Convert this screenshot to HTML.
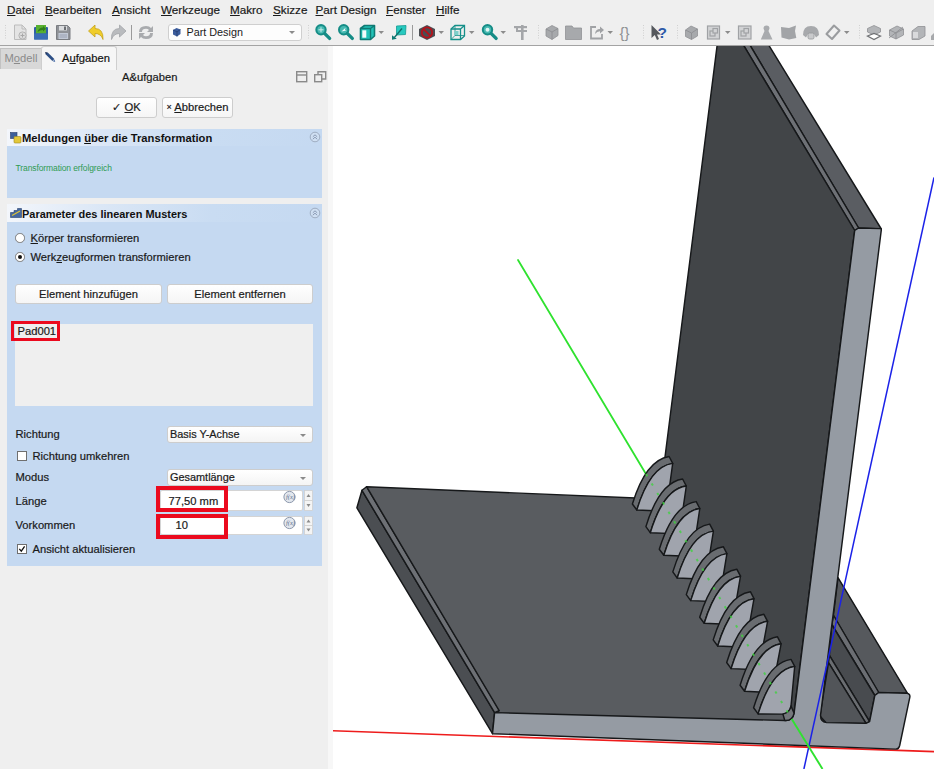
<!DOCTYPE html>
<html lang="de">
<head>
<meta charset="utf-8">
<title>FreeCAD</title>
<style>
html,body{margin:0;padding:0;}
body{width:934px;height:769px;overflow:hidden;background:#efefef;font-family:"Liberation Sans",sans-serif;color:#1c1c1c;position:relative;}
.abs{position:absolute;}
.menu span{position:absolute;top:3px;font-size:11.7px;-webkit-text-stroke:0.2px #1a1a1a;line-height:14px;white-space:nowrap;color:#1a1a1a;}
u{text-decoration:underline;text-underline-offset:1px;}
#toolbar{position:absolute;left:0;top:20px;width:934px;height:25px;background:#efefef;border-bottom:1px solid #a3a3a3;}
#view{position:absolute;left:333px;top:46px;width:601px;height:723px;background:#fff;}
#split{position:absolute;left:328px;top:46px;width:5px;height:723px;background:#f7f7f7;}
.lbl{position:absolute;font-size:11.2px;-webkit-text-stroke:0.2px #1a1a1a;line-height:14px;white-space:nowrap;color:#1a1a1a;}
.btn{position:absolute;box-sizing:border-box;border:1px solid #cdcdcd;border-radius:3px;background:linear-gradient(#ffffff,#f5f5f5);font-size:11.2px;-webkit-text-stroke:0.2px #1a1a1a;line-height:18px;text-align:center;color:#1a1a1a;white-space:nowrap;}
.combo{position:absolute;box-sizing:border-box;border:1px solid #cdcdcd;border-radius:3px;background:linear-gradient(#ffffff,#f4f4f4);font-size:10.9px;-webkit-text-stroke:0.2px #1a1a1a;line-height:15px;color:#1a1a1a;padding-left:2px;white-space:nowrap;}
.combo:after{content:"";position:absolute;right:6px;top:7px;border-left:3px solid transparent;border-right:3px solid transparent;border-top:3px solid #8a8a8a;}
.sec{position:absolute;left:7px;width:314.5px;background:#c5d9f1;}
.sechead{position:absolute;left:7px;width:315px;height:17px;background:linear-gradient(90deg,#f3f6fb 0%,#dbe7f6 30%,#c9dcf2 65%,#c5d9f1 100%);}
.sechead b{position:absolute;left:15px;top:2px;font-size:11.2px;line-height:14px;white-space:nowrap;color:#111;}
.red{position:absolute;box-sizing:border-box;border:4px solid #eb0a1e;}
.input{position:absolute;box-sizing:border-box;background:#fff;border:1px solid #d4d4d4;border-radius:2px;}
.cb{position:absolute;box-sizing:border-box;width:10px;height:10px;border:1px solid #6f6f6f;background:#fff;}
.radio{position:absolute;box-sizing:border-box;width:9.5px;height:9.5px;border:1px solid #7a7a7a;border-radius:50%;background:#fff;}
</style>
</head>
<body>
<!-- MENU -->
<div class="menu">
<span style="left:7px"><u>D</u>atei</span>
<span style="left:45px"><u>B</u>earbeiten</span>
<span style="left:112px"><u>A</u>nsicht</span>
<span style="left:161px"><u>W</u>erkzeuge</span>
<span style="left:230px"><u>M</u>akro</span>
<span style="left:273px"><u>S</u>kizze</span>
<span style="left:315.5px"><u>P</u>art Design</span>
<span style="left:386px"><u>F</u>enster</span>
<span style="left:436px"><u>H</u>ilfe</span>
</div>
<!-- TOOLBAR -->
<div id="toolbar"></div>
<!--TB-START-->
<svg class="abs" style="left:0;top:20px" width="934" height="25" viewBox="0 20 934 25">
<!-- handles -->
<g stroke="#d0d0d0" stroke-width="1" stroke-dasharray="1 1.5"><path d="M5.5 25 V40"/><path d="M308.5 25 V40"/><path d="M538.5 25 V40"/><path d="M643.5 25 V40"/><path d="M677.5 25 V40"/><path d="M859.5 25 V40"/></g>
<!-- new doc -->
<path d="M14.5 25 H22 L26 29 V39.5 H14.5 Z" fill="#e4e4e4" stroke="#bcbcbc" stroke-width="1"/>
<path d="M22 25 V29 H26" fill="none" stroke="#bcbcbc"/>
<circle cx="22.5" cy="35.5" r="3.6" fill="#dcdcdc" stroke="#b4b4b4"/><path d="M20.5 35.5 H24.5 M22.5 33.5 V37.5" stroke="#a8a8a8" stroke-width="1"/>
<!-- open -->
<rect x="34" y="27" width="14" height="12.5" rx="1" fill="#2f5fa5"/>
<path d="M36 25 H46 V33.5 H36 Z" fill="#57b030"/>
<path d="M37.5 32 Q38.5 27.5 43 27.5 V26 L46 28.8 L43 31.5 V30 Q40 30 37.5 32 Z" fill="#2f7d1c"/>
<rect x="34" y="33.5" width="14" height="6" fill="#3a6db5"/>
<!-- save -->
<path d="M56.5 25.5 H67.5 L70 28 V39.5 H56.5 Z" fill="#8f9297" stroke="#7a7d82" stroke-width="1"/>
<rect x="59" y="26" width="8" height="4.5" fill="#d9dbde"/><rect x="64" y="26.5" width="2" height="3.5" fill="#6b6e73"/>
<rect x="58.5" y="33" width="9.5" height="6" fill="#c2c9d6"/><path d="M59.5 35 H67 M59.5 37 H67" stroke="#8f97a8" stroke-width=".8"/>
<!-- undo -->
<path d="M88.5 31 L95 25 V28.5 Q103.5 28.5 103 39.5 Q101 33.5 95 33.5 V37 Z" fill="#f0cd2a" stroke="#c3a11a" stroke-width=".8" stroke-linejoin="round"/>
<!-- redo -->
<path d="M126 31 L119.5 25 V28.5 Q111 28.5 111.5 39.5 Q113.5 33.5 119.5 33.5 V37 Z" fill="#b9bbbe" stroke="#a2a4a8" stroke-width=".8" stroke-linejoin="round"/>
<path d="M131.5 25 V40" stroke="#9a9a9a" stroke-width="1"/>
<!-- refresh -->
<g fill="#a9abae"><path d="M139 32 Q139 26 146 26 Q149.5 26 151 28 L153 26 V32 H147 L149 30 Q148 28.8 146 28.8 Q142 28.8 142 32 Z"/><path d="M153 33 Q153 39 146 39 Q142.5 39 141 37 L139 39 V33 H145 L143 35 Q144 36.2 146 36.2 Q150 36.2 150 33 Z"/></g>
<!-- combobox -->
<rect x="168.5" y="24.5" width="133" height="16" rx="2.5" fill="#fdfdfd" stroke="#cfcfcf"/>
<path d="M173 30 L176.5 28 L180.5 29.5 L180.5 34 L177 36.5 L173 34.5 Z" fill="#3b5c9c"/><path d="M173 30 L177 31.8 L180.5 29.5 M177 31.8 V36.5" stroke="#23396b" stroke-width=".7" fill="none"/>
<text x="186.5" y="36.3" font-family="Liberation Sans, sans-serif" font-size="10.8" fill="#1a1a1a">Part Design</text>
<path d="M289 31 H295 L292 34 Z" fill="#8c8c8c"/>
<!-- zoom fit -->
<g id="mag"><circle cx="321" cy="29.8" r="4.7" fill="#46b9b1" stroke="#158c86" stroke-width="2"/><path d="M324.8 33.6 L329.6 38.4" stroke="#158c86" stroke-width="3.4" stroke-linecap="round"/></g>
<path d="M318.5 29.8 H323.5 M321 27.3 V32.3" stroke="#c8ecea" stroke-width="1"/>
<g><circle cx="343.7" cy="29.8" r="4.7" fill="#46b9b1" stroke="#158c86" stroke-width="2"/><path d="M347.5 33.6 L352.3 38.4" stroke="#158c86" stroke-width="3.4" stroke-linecap="round"/><path d="M341.5 31.5 L345.5 27.8 L345 30 L346.5 30.5 Z" fill="#f2fbfa"/></g>
<!-- cube -->
<path d="M360.5 28.5 L364.5 25.5 H374.5 V36 L370.5 39.5 H360.500 Z" fill="#22c2b7" stroke="#0f7a74" stroke-width="1.6" stroke-linejoin="round"/><path d="M360.500 28.500 H370.500 V39.500 M370.500 28.500 L374.500 25.500" stroke="#0f7a74" stroke-width="1.400" fill="none"/><rect x="362.300" y="30.300" width="4" height="7.400" fill="#f4fbfa"/>
<path d="M378.500 31 H384 L381.200 34 Z" fill="#8c8c8c"/>
<!-- flag -->
<path d="M396.500 26 L406 25.500 L405.500 34.500 L396.500 35 Z" fill="#27c9bf" stroke="#149a93" stroke-width=".8"/><path d="M393.500 38.500 L402 28.500" stroke="#0f6f6a" stroke-width="1.300"/><path d="M392 35.200 L396.800 38.800 L392 39.800 Z" fill="#0f7a74"/>
<path d="M412.500 25 V40" stroke="#9a9a9a" stroke-width="1"/>
<!-- no entry -->
<path d="M419 29 L427 25 L435 29 V36 L427 40 L419 36 Z" fill="#4a4d52"/><circle cx="427" cy="32.500" r="5.200" fill="none" stroke="#b5121b" stroke-width="1.800"/><path d="M423.300 28.800 L430.700 36.200" stroke="#b5121b" stroke-width="1.800"/>
<path d="M438.500 31 H444 L441.200 34 Z" fill="#8c8c8c"/>
<!-- wire cube -->
<g fill="none" stroke="#148f89" stroke-width="1.300"><path d="M451 29 L455 25.500 H464.500 V36 L460.500 39.500 H451 Z"/><path d="M451 29 H460.500 V39.500 M460.500 29 L464.500 25.500"/><path d="M455 25.500 V35.500 H464 M455 35.500 L451 39.500" stroke-width=".8"/></g><rect x="454.500" y="31" width="4" height="4" fill="#7fd0cb"/>
<path d="M469 31 H474.500 L471.700 34 Z" fill="#8c8c8c"/>
<!-- zoom -->
<g><circle cx="487.500" cy="29.800" r="4.700" fill="#46b9b1" stroke="#158c86" stroke-width="2"/><path d="M491.300 33.600 L496.100 38.400" stroke="#158c86" stroke-width="3.400" stroke-linecap="round"/><circle cx="487.500" cy="29.800" r="2" fill="#dff4f2"/></g>
<path d="M500.500 31 H506 L503.200 34 Z" fill="#8c8c8c"/>
<!-- measure -->
<g fill="#a4a6a9"><rect x="514" y="26" width="13" height="2.200"/><rect x="516" y="30" width="11" height="2"/><rect x="521" y="25" width="2.600" height="15"/><rect x="516" y="28" width="2" height="4"/></g>
<!-- gray group 2 -->
<g fill="#a7a9ac" stroke="#909295" stroke-width=".8">
<path d="M546 29 L552 25.500 L558 28.500 V35.500 L552 39.500 L546 36 Z"/>
<path d="M565.500 26 H572 L573.500 28 H581.500 V39.500 H565.500 Z"/>
</g>
<path d="M546 29 L552 32 L558 28.500 M552 32 V39.500" stroke="#8a8c8f" stroke-width=".8" fill="none"/>
<g fill="none" stroke="#a0a2a5" stroke-width="1.800"><path d="M596 27 H591 V38.500 H602 V34"/></g><path d="M595 34 Q595.500 29 600 29 V26.500 L604 30 L600 33.500 V31.200 Q597 31.200 595 34 Z" fill="#a0a2a5"/>
<path d="M607.500 31 H613 L610.200 34 Z" fill="#8c8c8c"/>
<text x="619.500" y="37.5" font-family="Liberation Sans, sans-serif" font-size="15" fill="#8e9093">{}</text>
<!-- whats this -->
<path d="M651.500 25 L651.500 38 L654.800 35 L657 40 L659 39 L657 34.500 H661 Z" fill="#55585d"/>
<text x="657.5" y="37.5" font-family="Liberation Sans, sans-serif" font-size="15.5" font-weight="bold" fill="#2c5aa8">?</text>
<!-- part -->
<g fill="#a7a9ac" stroke="#909295" stroke-width=".8"><path d="M685.500 30 L691 26 L697.500 29 V36 L691.500 39.500 L685.500 36.500 Z"/></g><path d="M685.500 30 L691.500 33 L697.500 29 M691.500 33 V39.500" stroke="#8a8c8f" stroke-width=".8" fill="none"/>
<g fill="#d2d3d5" stroke="#a0a2a5" stroke-width="1.200"><rect x="707.500" y="26" width="12" height="13"/><rect x="710" y="31" width="5" height="5"/><rect x="713" y="28.500" width="4.500" height="4.500"/></g>
<path d="M725 31 H730.500 L727.700 34 Z" fill="#8c8c8c"/>
<g fill="#d2d3d5" stroke="#a0a2a5" stroke-width="1.200"><rect x="738.500" y="26" width="12.500" height="13"/><rect x="741" y="31" width="5" height="5"/><rect x="744" y="28.500" width="4.500" height="4.500"/></g>
<path d="M766.500 25.500 Q769.500 25.500 769.500 28.500 L768.500 31 L772.500 39.500 H760.800 L764.500 31 L763.500 28.500 Q763.500 25.500 766.500 25.500 Z" fill="#a9abae"/>
<path d="M781 27 L789 28 L796 25.500 L795 31 L796.300 38 L789 39.500 L781.500 37.500 Z" fill="#a2a4a7"/>
<path d="M803 35 Q803 26 811 26 Q819 26 819 35 L816 37.500 L814 34 H808 L806 37.500 Z" fill="#a7a9ac"/><rect x="808" y="33" width="6" height="6" rx="1.500" fill="#c9cacc" stroke="#96989b" stroke-width=".8"/>
<path d="M826.500 34 L834 25.500 L839.500 30.500 L832 39 Z" fill="#f0f0f0" stroke="#9a9c9f" stroke-width="2" stroke-linejoin="round"/>
<path d="M844 31 H849.500 L846.700 34 Z" fill="#8c8c8c"/>
<g fill="#b3b5b8" stroke="#8f9194" stroke-width=".8"><path d="M867.500 28.500 L874 25.500 L880.500 28.500 V32 L874 35 L867.500 32 Z"/></g><path d="M867.500 36 L874 33.500 L880.500 36 L874 39.500 Z" fill="#fff" stroke="#6f7174" stroke-width="1.200"/>
<g fill="#b3b5b8" stroke="#8f9194" stroke-width=".8"><path d="M889.500 30 L897 26 L903.500 29 V35 L896 39 L889.500 36 Z"/></g><path d="M889.500 30 L896 33 L903.500 29 M896 33 V39 M889 38 L903 27" stroke="#8a8c8f" stroke-width=".8" fill="none"/>
<g fill="#b3b5b8" stroke="#8f9194" stroke-width=".8"><path d="M912 31 L918 26.500 H925 V36 L919 39.500 H912 Z"/></g><rect x="913" y="32" width="5" height="6" fill="#d9dadc"/>
<path d="M931 36 L934 33 V40 H931 Z" fill="#a7a9ac"/>
</svg>
<!--TB-END-->
<!-- PANEL -->
<!--PANEL-START-->
<div class="abs" style="left:0;top:48px;width:41.5px;height:21px;box-sizing:border-box;background:#d8d8d8;border:1px solid #c2c2c2;border-bottom:none;"></div>
<span class="lbl" style="left:4.5px;top:51px;color:#8b8b8b;font-size:11.2px;-webkit-text-stroke:0;">M<u>o</u>dell</span>
<div class="abs" style="left:41px;top:46px;width:76px;height:24px;box-sizing:border-box;background:#f6f6f6;border:1px solid #cfcfcf;border-bottom:none;border-radius:3px 3px 0 0;"></div>
<svg class="abs" style="left:44px;top:51px" width="12.5" height="12.5" viewBox="0 0 14 14"><path d="M2.2 2.2 L4.2 1.6 L11.6 9 L9.4 11.2 L2 3.8 Z" fill="#2d4f86"/><path d="M1.2 1.2 L4 1.8 L2 4 Z" fill="#1c2f55"/><path d="M9.8 11.4 L11.8 9.4 L12.6 12.4 Z" fill="#4a6ea8"/></svg>
<span class="lbl" style="left:62px;top:51px;color:#111;">A<u>u</u>fgaben</span>
<span class="lbl" style="left:122px;top:69.7px;">A&amp;ufgaben</span>
<svg class="abs" style="left:295px;top:70px" width="34" height="14" viewBox="0 0 34 14"><g fill="none" stroke="#8a8a8a" stroke-width="1.4"><rect x="1.7" y="1.7" width="10" height="10"/><path d="M1.7 5 H11.7"/><rect x="19.7" y="4.7" width="7" height="7" /><path d="M23 4.7 V1.7 H30.7 V9 H26.7"/></g></svg>
<div class="btn" style="left:96px;top:96.5px;width:61px;height:21px;line-height:19px;">✓ <u>O</u>K</div>
<div class="btn" style="left:162px;top:96.5px;width:71px;height:21px;line-height:19px;"><span style="font-size:9px;position:relative;top:-1px">×</span> <u>A</u>bbrechen</div>

<!-- section 1 -->
<div class="sec" style="top:129px;height:68.5px;"></div>
<div class="sechead" style="top:129px;"><b>Meldungen <u>ü</u>ber die Transformation</b></div>
<svg class="abs" style="left:10px;top:132px" width="12" height="12" viewBox="0 0 12 12"><rect x="0.5" y="0.5" width="6.5" height="6" fill="#3d5f9a" stroke="#2a3f6a" stroke-width=".6"/><rect x="4" y="4.5" width="7" height="6.5" rx="1" fill="#e3c83a" stroke="#9d8a20" stroke-width=".6"/></svg>
<svg class="abs" style="left:308.7px;top:131.2px" width="12" height="12" viewBox="0 0 12 12"><circle cx="6" cy="6" r="4.8" fill="#cfdff2" stroke="#98a6ba" stroke-width=".9"/><path d="M3.8 5.8 L6 3.8 L8.2 5.8 M3.8 8.2 L6 6.2 L8.2 8.2" fill="none" stroke="#8292ab" stroke-width=".9"/></svg>
<span class="lbl" style="left:15.5px;top:162.5px;font-size:8.5px;line-height:10px;color:#2e9b52;-webkit-text-stroke:0;letter-spacing:-0.1px">Transformation erfolgreich</span>

<!-- section 2 -->
<div class="sec" style="top:204px;height:362px;"></div>
<div class="sechead" style="top:204px;height:18px;"><b style="top:2.5px;font-size:10.95px">Parameter des linearen Musters</b></div>
<svg class="abs" style="left:10px;top:207px" width="12" height="12" viewBox="0 0 12 12"><path d="M0.5 5.5 L4 5.5 L4 3.5 L7.5 3.5 L7.5 1.5 L11.5 1.5 L11.5 10.5 L0.5 10.5 Z" fill="#44679f" stroke="#27406c" stroke-width=".6"/><path d="M2 8.5 L10 4" stroke="#e0c433" stroke-width="1.2"/></svg>
<svg class="abs" style="left:308.7px;top:206.5px" width="12" height="12" viewBox="0 0 12 12"><circle cx="6" cy="6" r="4.8" fill="#cfdff2" stroke="#98a6ba" stroke-width=".9"/><path d="M3.8 5.8 L6 3.8 L8.2 5.8 M3.8 8.2 L6 6.2 L8.2 8.2" fill="none" stroke="#8292ab" stroke-width=".9"/></svg>

<div class="radio" style="left:15px;top:233px;"></div>
<span class="lbl" style="left:30.5px;top:231px;"><u>K</u>örper transformieren</span>
<div class="radio" style="left:15px;top:252px;"></div>
<div class="abs" style="left:18px;top:255px;width:4px;height:4px;border-radius:50%;background:#111;"></div>
<span class="lbl" style="left:30.5px;top:250px;">Werk<u>z</u>eugformen transformieren</span>

<div class="btn" style="left:15px;top:284px;width:147px;height:20px;">Element hinzufügen</div>
<div class="btn" style="left:167px;top:284px;width:146px;height:20px;">Element entfernen</div>

<div class="abs" style="left:15px;top:324px;width:298px;height:82px;background:#efefef;"></div>
<span class="lbl" style="left:17.5px;top:323.5px;">Pad001</span>
<div class="red" style="left:11px;top:321px;width:49px;height:20px;border-width:3px;"></div>

<span class="lbl" style="left:15.5px;top:427px;">Richtung</span>
<div class="combo" style="left:167px;top:425.5px;width:146px;height:17px;">Basis Y-Achse</div>
<div class="cb" style="left:17px;top:450.5px;"></div>
<span class="lbl" style="left:32.5px;top:448.5px;">Richtun<u>g</u> umkehren</span>
<span class="lbl" style="left:15.5px;top:470px;">Modus</span>
<div class="combo" style="left:167px;top:468.5px;width:146px;height:17px;">Gesamtlänge</div>

<span class="lbl" style="left:15.5px;top:494px;">Länge</span>
<div class="input" style="left:160px;top:490px;width:143px;height:21px;"></div>
<span class="lbl" style="left:168.5px;top:494px;">77,50 mm</span>
<span class="lbl" style="left:15.5px;top:518px;">Vorkommen</span>
<div class="input" style="left:160px;top:516px;width:143px;height:19px;"></div>
<span class="lbl" style="left:175.5px;top:518px;">10</span>
<svg class="abs" style="left:283px;top:490px" width="32" height="46" viewBox="0 0 32 46">
<g fill="#e3e8ef" stroke="#8b97ab" stroke-width="1"><circle cx="6.5" cy="7" r="5.6"/><circle cx="6.5" cy="33" r="5.6"/></g>
<g font-family="Liberation Serif,serif" font-style="italic" font-size="6.5" fill="#5f6f8c"><text x="3" y="9">f(x)</text><text x="3" y="35">f(x)</text></g>
<g fill="#f4f4f4" stroke="#d0d0d0" stroke-width=".8"><rect x="21.5" y="0.5" width="8" height="10"/><rect x="21.5" y="10.5" width="8" height="10"/><rect x="21.5" y="26.5" width="8" height="9"/><rect x="21.5" y="35.5" width="8" height="9"/></g>
<g fill="#8a8a8a"><path d="M23.5 7 L27.5 7 L25.5 4 Z"/><path d="M23.5 14 L27.5 14 L25.5 17 Z"/><path d="M23.5 32.5 L27.5 32.5 L25.5 29.5 Z"/><path d="M23.5 38.5 L27.5 38.5 L25.5 41.5 Z"/></g>
</svg>
<div class="red" style="left:156px;top:485.5px;width:72px;height:26.5px;"></div>
<div class="red" style="left:156px;top:513.5px;width:72px;height:25.5px;"></div>

<div class="cb" style="left:17px;top:544px;"></div>
<svg class="abs" style="left:17px;top:544px" width="10" height="10" viewBox="0 0 10 10"><path d="M2.3 4.8 L4.3 7.2 L7.6 2.4" fill="none" stroke="#111" stroke-width="1.3"/></svg>
<span class="lbl" style="left:32.5px;top:542px;">Ansicht aktualisieren</span>
<!--PANEL-END-->
<div id="split"></div>
<!-- 3D VIEW -->
<div id="view"></div>
<!--VIEW-START-->
<svg class="abs" style="left:333px;top:46px" width="601" height="723" viewBox="333 46 601 723">
<g stroke="#16181a" stroke-width="1.45" stroke-linejoin="round" stroke-linecap="round">
<path d="M333 730.8 L934 751.6" stroke="#ee1c1c" stroke-width="1.6" fill="none"/>
<path d="M518 260 L660 497.5" stroke="#2fe22f" stroke-width="1.8" fill="none"/>
<polygon points="838.0,577.6 907.5,693.3 880.0,700.0 872.0,724.0 824.0,724.0 818.0,716.0" fill="#484b4f" stroke="none"/>
<polygon points="838.0,577.6 907.5,693.3 878.5,692.7 833.4,615.3" fill="#56595d"/>
<polygon points="833.6,615.5 878.8,692.5 874.8,695.5 831.8,624.5" fill="#6b6e73"/>
<polygon points="831.8,624.5 874.8,695.5 869.6,721.7 829.4,655.3" fill="#484b4f"/>
<polygon points="829.4,655.3 869.6,721.7 866.0,723.4 828.5,662.6" fill="#6a6d71"/>
<polygon points="828.5,662.6 866.0,723.4 825.8,722.6 820.0,716.0" fill="#525559"/>
<polygon points="362.0,490.3 494.6,712.6 492.5,733.7 356.9,507.8" fill="#4b4e52"/>
<polygon points="366.6,486.7 499.5,710.5 494.6,712.6 362.0,490.3" fill="#6d7075"/>
<polygon points="366.6,486.7 660.0,499.0 792.0,719.0 784.8,721.5 495.5,713.8 499.3,710.8" fill="#595c60"/>
<polygon points="746.9,40.0 765.6,40.0 881.3,229.0 858.6,228.0" fill="#5a5d62"/>
<polygon points="740.4,40.0 746.9,40.0 858.6,228.0 854.7,230.5" fill="#6d7075"/>
<polygon points="717.8,40.0 740.4,40.0 854.7,230.5 794.1,713.1 791.7,719.0 660.0,499.0 665.0,457.0" fill="#424548"/>
<path d="M854.7 230.5 L858.6 228 L880.3 228.6 Q881.5 228.7 881.3 230 L820.6 714.5 Q820.2 722.3 826.5 722.6 L866 723.4 L869.6 721.7 L874.8 695.5 L878.8 692.5 L906.5 693.3 Q910.5 693.8 909.8 697.4 L899.7 745.5 Q898.8 749.3 895.5 749.1 L492.5 733.7 L494.6 712.6 L784.8 720.5 Q792.6 721 794.1 713.1 Z" fill="#959ba3"/>
<path d="M669.1 456.5 Q645.9 460.0 632.4 504.0 L636.8 510.0 Q650.2 466.3 672.7 463.4 Z" fill="#696c70"/>
<path d="M672.7 463.4 Q650.2 466.3 636.8 510.0 L666.2 511.2 Z" fill="#a0a4ad"/>
<path d="M682.6 479.0 Q659.4 482.5 645.9 526.6 L650.3 532.7 Q663.7 488.9 686.3 486.0 Z" fill="#696c70"/>
<path d="M686.3 486.0 Q663.7 488.9 650.3 532.7 L679.4 533.9 Z" fill="#a0a4ad"/>
<path d="M696.2 501.6 Q672.9 505.1 659.3 549.3 L663.8 555.3 Q677.2 511.4 699.8 508.5 Z" fill="#696c70"/>
<path d="M699.8 508.5 Q677.2 511.4 663.8 555.3 L692.6 556.5 Z" fill="#a0a4ad"/>
<path d="M709.7 524.1 Q686.4 527.6 672.8 571.9 L677.2 578.0 Q690.7 534.0 713.4 531.1 Z" fill="#696c70"/>
<path d="M713.4 531.1 Q690.7 534.0 677.2 578.0 L705.8 579.2 Z" fill="#a0a4ad"/>
<path d="M723.3 546.7 Q699.9 550.2 686.3 594.6 L690.7 600.6 Q704.2 556.5 726.9 553.6 Z" fill="#696c70"/>
<path d="M726.9 553.6 Q704.2 556.5 690.7 600.6 L719.0 601.8 Z" fill="#a0a4ad"/>
<path d="M736.8 569.2 Q713.4 572.7 699.7 617.2 L704.2 623.3 Q717.7 579.1 740.5 576.2 Z" fill="#696c70"/>
<path d="M740.5 576.2 Q717.7 579.1 704.2 623.3 L732.2 624.5 Z" fill="#a0a4ad"/>
<path d="M750.4 591.7 Q726.9 595.3 713.2 639.9 L717.7 646.0 Q731.2 601.7 754.0 598.7 Z" fill="#696c70"/>
<path d="M754.0 598.7 Q731.2 601.7 717.7 646.0 L745.4 647.2 Z" fill="#a0a4ad"/>
<path d="M763.9 614.3 Q740.4 617.8 726.7 662.5 L731.1 668.6 Q744.7 624.2 767.6 621.3 Z" fill="#696c70"/>
<path d="M767.6 621.3 Q744.7 624.2 731.1 668.6 L758.6 669.8 Z" fill="#a0a4ad"/>
<path d="M777.5 636.8 Q753.9 640.4 740.1 685.2 L744.6 691.3 Q758.2 646.8 781.1 643.8 Z" fill="#696c70"/>
<path d="M781.1 643.8 Q758.2 646.8 744.6 691.3 L771.8 692.5 Z" fill="#a0a4ad"/>
<path d="M791.0 659.4 Q767.4 662.9 753.6 707.8 L758.1 713.9 Q771.8 669.4 794.7 666.4 Z" fill="#696c70"/>
<path d="M794.7 666.4 Q771.8 669.4 758.1 713.9 L782.9 714.1 Q790 712.5 791 706 Z" fill="#a0a4ad"/>
<path d="M782.9 714.1 Q790 712.5 791 706 L794.1 713.1 Q792.6 721 784.8 720.5 Z" fill="#74777b"/>
</g>
<path d="M934 177.4 L803.9 769" stroke="#1b22e8" stroke-width="1.5" fill="none"/>
<path d="M791.7 719 L822.5 769" stroke="#2fe22f" stroke-width="1.9" fill="none"/>
<path d="M646 474 L791.7 719" stroke="#3fd23f" stroke-width="2" stroke-dasharray="2.5 8.5" fill="none" opacity=".8"/>
</svg>
<!--VIEW-END-->
</body>
</html>
